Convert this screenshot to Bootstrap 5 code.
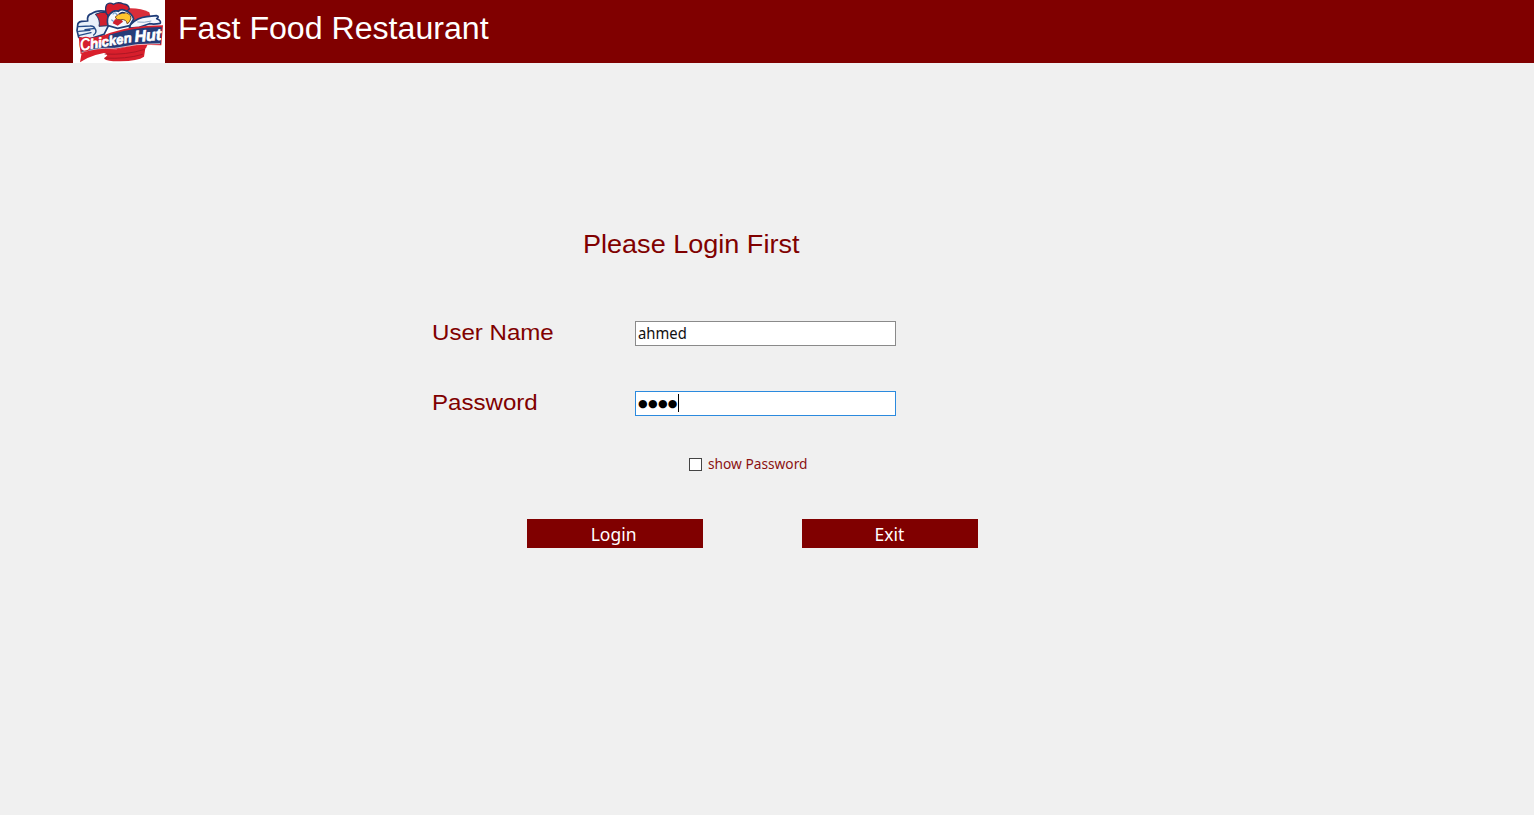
<!DOCTYPE html>
<html lang="en">
<head>
<meta charset="utf-8">
<meta name="viewport" content="width=device-width, initial-scale=1">
<title>Fast Food Restaurant</title>
<link href="https://cdn.jsdelivr.net/npm/bootstrap@5.3.0/dist/css/bootstrap.min.css" rel="stylesheet">
<style>
body{background:#f0f0f0;font-family:"Noto Sans",sans-serif;min-height:100vh;overflow:hidden}
.topbar{background:#800000;height:63px;padding-left:73px}
.sx{display:inline-block;transform-origin:0 50%;white-space:nowrap}
.arial{font-family:"Liberation Sans",sans-serif;color:#800000}
.brand-text{font-size:31px;line-height:36px;color:#fff;margin:11px 0 0 13px;transform:scaleX(1.036)}
.heading{font-size:26px;line-height:30px;margin:166px 0 0 582.5px;transform:scaleX(1.04)}
.login-form{width:1534px}
.field-row{height:25px;padding-left:432px}
.field-label{width:203px;font-size:22.5px;line-height:23px}
.field-label .sx{transform:scaleX(1.07)}
.field-box{width:261px;height:25px;border:1px solid #8a8a8a;border-radius:0;background:#fff;padding:0 0 0 2px;color:#111;font-size:16px;line-height:22px;transition:none}
.field-box .sx{transform:scaleX(.925)}
.field-box.is-current{border:1px solid #2b8ade!important}
.dots{font-family:"DejaVu Sans",sans-serif;font-size:11px;line-height:24px;letter-spacing:.35px;color:#000}
.caret{width:1px;height:18px;background:#000;margin-top:2px}
.check-row{padding-left:689px;height:20px}
.form-check-input.tick{width:13px;height:13px;border:1px solid #444;border-radius:0;background:#fff;margin:0}
.check-text{font-size:14px;line-height:20px;color:#8b1212;margin-left:6px;transform:scaleX(.98)}
.action-row{padding-left:527px;gap:99px}
.btn-maroon{--bs-btn-color:#fff;--bs-btn-bg:#800000;--bs-btn-hover-bg:#980000;--bs-btn-hover-color:#fff;width:176px;height:29px;border:0;border-radius:0;padding:1px 2px 0 0;font-size:18px;line-height:29px}
.btn-maroon .sx{transform:scaleX(.97);transform-origin:50% 50%}
</style>
</head>
<body>
<header class="topbar d-flex align-items-start">
<svg width="92" height="63" viewBox="21 0 276 189" role="img" aria-label="Chicken Hut" class="flex-shrink-0">
  <rect x="21" y="0" width="276" height="189" fill="#fff"/>
  <!-- red backdrop -->
  <path d="M180 25Q222 22 250 37L256 60L205 80L185 60Z" fill="#d92e3a"/>
  <!-- left wing and shoulder -->
  <path d="M35 77Q34 66 47 64L65 63Q62 45 77 41Q92 29 121 34L129 74L114 103L57 121L38 112L33 91Z" fill="#e9f1fa" stroke="#1e3c78" stroke-width="5" stroke-linejoin="round"/>
  <path d="M88 43Q103 34 124 38L128 77L99 79Q104 59 88 43Z" fill="#d0202e" stroke="#203868" stroke-width="3"/>
  <path d="M36 80L72 78Q84 77 86 85L57 89M38 94L72 91M40 106L75 98M86 84Q95 96 83 105" fill="none" stroke="#244b89" stroke-width="4" stroke-linecap="round"/>
  <!-- right wing -->
  <path d="M194 73Q214 53 243 50L271 47Q282 50 272 56Q286 61 283 70Q264 74 250 71L220 82L190 84Z" fill="#f4f8ff" stroke="#1e3c78" stroke-width="5" stroke-linejoin="round"/>
  <path d="M214 66Q235 69 256 63" fill="none" stroke="#8aa7c9" stroke-width="3"/>
  <!-- comb -->
  <path d="M121 41Q116 24 122 14Q130 5 143 13Q155 4 173 12Q188 13 190 27L180 35L146 32L133 50Z" fill="#d51d2c" stroke="#23366a" stroke-width="4" stroke-linejoin="round"/>
  <!-- head -->
  <path d="M126 77Q120 55 132 42Q143 29 157 34Q167 24 183 34Q198 42 203 57L191 77L155 85Z" fill="#f4f8ff" stroke="#1f4078" stroke-width="5"/>
  <path d="M140 43Q148 33 153 45M136 59Q146 70 156 64" fill="none" stroke="#76a1d2" stroke-width="4"/>
  <path d="M147 58L164 56L171 65L155 77L140 70Z" fill="#cf1f2e"/>
  <path d="M147 52Q155 41 172 38Q193 38 195 54Q193 64 184 72Q181 56 164 59Q154 62 147 52Z" fill="#ffc52e" stroke="#7b4929" stroke-width="3"/>
  <path d="M160 42Q169 34 176 40" fill="none" stroke="#182f65" stroke-width="4"/>
  <!-- ribbon and bucket -->
  <path d="M113 153Q174 155 240 133L234 170Q216 183 163 184Q126 185 114 176L124 166Z" fill="#d71f2c"/>
  <path d="M116 162Q180 166 236 148M116 174Q178 178 230 163" fill="none" stroke="#ac1724" stroke-width="3"/>
  <path d="M38 111Q85 119 133 98Q202 76 291 76L286 136Q216 131 158 147Q95 151 44 162Z" fill="#d6202e"/>
  <path d="M129 104Q202 82 287 81L284 132Q216 128 158 144Q95 144 48 157L47 150Q88 127 124 127Z" fill="#263c78"/>
  <path d="M47 159Q91 143 151 148Q214 132 245 132L240 145Q200 143 154 158Q91 154 42 187Z" fill="#d91f2c"/>
  <path d="M47 157Q92 142 145 145Q211 130 282 131" fill="none" stroke="#fff" stroke-width="2"/>
  <g font-family="Liberation Sans, sans-serif" font-weight="700" font-style="italic" fill="#fff" stroke="#d31e2f" stroke-width="7" paint-order="stroke" stroke-linejoin="round">
    <text transform="translate(44 153) rotate(-9)" font-size="52" textLength="32" lengthAdjust="spacingAndGlyphs">C</text>
  </g>
  <g font-family="Liberation Sans, sans-serif" font-weight="700" font-style="italic" fill="#fff" stroke="#fff" stroke-width="2" stroke-linejoin="round">
    <text transform="translate(74 146) rotate(-9)" font-size="40" textLength="126" lengthAdjust="spacingAndGlyphs">hicken</text>
    <text transform="translate(207 126) rotate(-5)" font-size="48" textLength="80" lengthAdjust="spacingAndGlyphs">Hut</text>
  </g>
</svg>
<span class="arial sx brand-text">Fast Food Restaurant</span>
</header>
<main class="login-form">
  <div class="d-flex"><span class="arial sx heading">Please Login First</span></div>
  <div class="field-row d-flex" style="margin-top:62px">
    <div class="field-label arial"><span class="sx">User Name</span></div>
    <div class="form-control field-box"><span class="sx">ahmed</span></div>
  </div>
  <div class="field-row d-flex" style="margin-top:45px">
    <div class="field-label arial"><span class="sx">Password</span></div>
    <div class="form-control field-box is-current d-flex"><span class="dots">●●●●</span><span class="caret"></span></div>
  </div>
  <div class="check-row d-flex align-items-center" style="margin-top:38px">
    <input class="form-check-input tick" type="checkbox" id="show">
    <label class="sx check-text" for="show">show Password</label>
  </div>
  <div class="action-row d-flex" style="margin-top:45px">
    <button type="button" class="btn btn-maroon"><span class="sx">Login</span></button>
    <button type="button" class="btn btn-maroon"><span class="sx">Exit</span></button>
  </div>
</main>
<script src="https://cdn.jsdelivr.net/npm/bootstrap@5.3.0/dist/js/bootstrap.bundle.min.js"></script>
</body>
</html>
